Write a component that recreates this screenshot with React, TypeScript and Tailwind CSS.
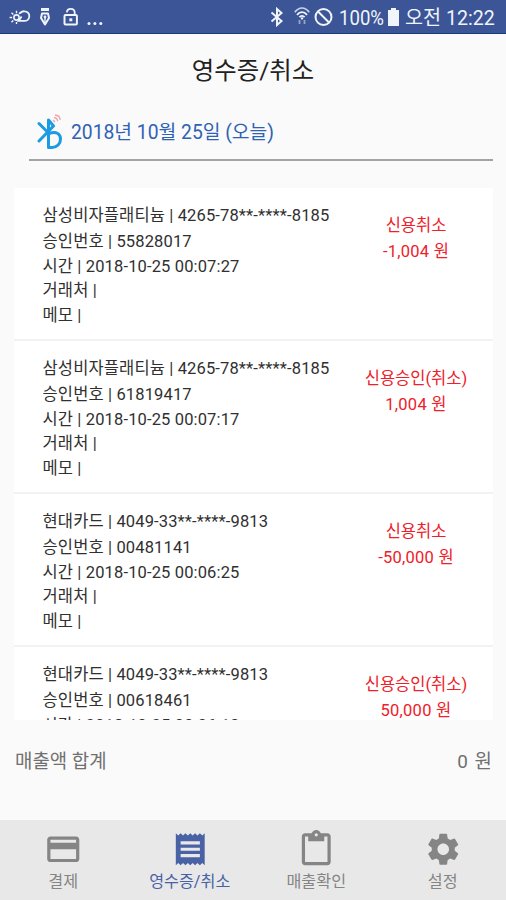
import React from 'react';
import { MdContentPaste, MdCreditCard, MdReceipt, MdSettings } from 'react-icons/md';

interface Receipt {
  card: string;
  approvalNo: string;
  time: string;
  status: string;
  amount: string;
}

const receipts: Receipt[] = [
  { card: '삼성비자플래티늄 | 4265-78**-****-8185', approvalNo: '55828017', time: '2018-10-25 00:07:27', status: '신용취소', amount: '-1,004 원' },
  { card: '삼성비자플래티늄 | 4265-78**-****-8185', approvalNo: '61819417', time: '2018-10-25 00:07:17', status: '신용승인(취소)', amount: '1,004 원' },
  { card: '현대카드 | 4049-33**-****-9813', approvalNo: '00481141', time: '2018-10-25 00:06:25', status: '신용취소', amount: '-50,000 원' },
  { card: '현대카드 | 4049-33**-****-9813', approvalNo: '00618461', time: '2018-10-25 00:06:13', status: '신용승인(취소)', amount: '50,000 원' },
];

const tabs = [
  { label: '결제', icon: MdCreditCard, active: false },
  { label: '영수증/취소', icon: MdReceipt, active: true },
  { label: '매출확인', icon: MdContentPaste, active: false },
  { label: '설정', icon: MdSettings, active: false },
];

const StatusBar: React.FC = () => (
  <div className="flex h-[34px] shrink-0 items-center border-b border-[#163a80] bg-[#3b5597] pl-[9px] pr-[11px] text-[#f0f4fb]">
    {/* 알림 아이콘 */}
    <svg className="h-5 w-[22px]" viewBox="0 0 22 20" fill="none" stroke="currentColor">
      <circle cx="7.5" cy="10.5" r="2.6" strokeWidth="1.6" />
      <path d="M7.5 3.8v2.4M7.5 15v2M.6 10.5h2.6M2.5 5.8l1.8 1.7M2.5 15.2l1.8-1.7M11.5 5.3l-1.4 1.6" strokeWidth="1.4" />
      <path d="M11 6.5c.8-1.600 2.6-2.400 4.600-2.200 3 .2 4.900 2.200 4.700 4.900-.2 2.900-2.300 4.900-5.300 4.700H9.600l3-4.400" strokeWidth="1.8" />
    </svg>
    <svg className="ml-[8px] h-[20px] w-3" viewBox="0 0 12 20" fill="none">
      <path d="M2 1h8v3H2z" fill="currentColor" />
      <path d="M3 6.5h6L10 11 6 17.5 2 11z" stroke="currentColor" strokeWidth="2" strokeLinejoin="round" />
      <circle cx="6" cy="10" r="1.4" fill="currentColor" />
      <path d="M6 11v6" stroke="currentColor" strokeWidth="1.4" />
    </svg>
    <svg className="ml-[12px] h-[20px] w-4" viewBox="0 0 16 20" fill="none" stroke="currentColor">
      <rect x="1.5" y="8" width="12.4" height="9.6" rx="1" strokeWidth="2" />
      <path d="M3.8 5.4C4 3 5.3 1.8 7.7 1.8s4 1.4 4 3.8V8" strokeWidth="1.8" />
      <path d="M6.3 11.3h3v3h-3z" fill="currentColor" stroke="none" />
    </svg>
    <svg className="ml-[8px] h-5 w-4" viewBox="0 0 16 20" fill="currentColor">
      <circle cx="2" cy="16.5" r="1.5" />
      <circle cx="7.9" cy="16.5" r="1.5" />
      <circle cx="13.8" cy="16.5" r="1.5" />
    </svg>

    <svg className="ml-auto h-5 w-[14px]" viewBox="0 0 14 20" fill="none" stroke="currentColor" strokeWidth="2">
      <path d="M1.5 5.5l10 8.500L7 18V2l4.500 4-10 8.500" />
    </svg>
    <svg className="ml-[10px] h-5 w-4" viewBox="0 0 16 20" fill="none" stroke="currentColor">
      <path d="M.8 5.2C5-.4 11-.4 15.2 5.2" strokeWidth="1.6" opacity=".8" />
      <path d="M3 7.8c3-3.6 7-3.6 10 0M5.4 10.2c1.6-1.8 3.6-1.8 5.2 0" strokeWidth="1.8" />
      <path d="M8 10.4v2" strokeWidth="2.2" />
      <path d="M5.5 13v4M10.5 13v4" strokeWidth="1.8" opacity=".5" />
    </svg>
    <svg className="ml-[4px] h-5 w-[19px]" viewBox="0 0 19 20" fill="none" stroke="currentColor" strokeWidth="2">
      <circle cx="9.5" cy="10" r="8" />
      <path d="M4 4.5l11 11" />
    </svg>
    <span className="ml-[6px] w-[45px] origin-left scale-x-[.93] whitespace-nowrap pt-[2px] text-[20px] leading-[32px]">100%</span>
    <svg className="ml-[3px] h-5 w-[13px]" viewBox="0 0 13 20" fill="currentColor">
      <path d="M4 1h5v2h3v16H1V3h3z" />
    </svg>
    <span className="ml-[5px] w-[90px] origin-left scale-x-[.98] whitespace-nowrap pt-[2px] text-[20px] leading-[32px]">오전 12:22</span>
  </div>
);

const ReceiptRow: React.FC<{ item: Receipt }> = ({ item }) => (
  <li className="flex h-[153px] shrink-0 border-b-2 border-[#f2f2f2] bg-white">
    <div className="w-[325px] whitespace-nowrap pl-[28.5px] pt-[15px] text-[16.5px] tracking-[0.14px] text-[#303030]">
      <p className="h-[26px] leading-[25px]">{item.card}</p>
      <p className="h-[25px] leading-[25px]">승인번호 | {item.approvalNo}</p>
      <p className="h-[26px] leading-[25px]">시간 | {item.time}</p>
      <p className="h-[23px] leading-[22px]">거래처 |</p>
      <p className="h-[26px] leading-[26px]">메모 |</p>
    </div>
    <div className="flex-1 pt-[25px] text-center text-[16.5px] leading-[26px] text-[#ee2029]">
      <p>{item.status}</p>
      <p className="tracking-[0.25px]">{item.amount}</p>
    </div>
  </li>
);

export default function App() {
  return (
    <div className="flex h-[900px] w-[506px] flex-col overflow-hidden bg-[#fafafa] font-[Roboto,'Noto_Sans_CJK_KR',sans-serif]">
      <StatusBar />

      <h1 className="mt-[17px] h-10 text-center text-[24.4px] leading-10 text-[#222]">영수증/취소</h1>

      {/* 조회 날짜 */}
      <div className="ml-[29px] mr-[13px] mt-[17px] flex h-[53px] border-b-2 border-[#a0a4a4] pl-[8px]">
        <svg className="mt-[4px] h-[40px] w-[28px] shrink-0" viewBox="0 0 28 40" fill="none">
          <path
            d="M2 11.5L12 21.5M2 29L16.500 14 11.500 8V35.500h3.500c5 0 8.500-3.800 8.500-8.500 0-5.500-4.500-8-11.500-5.500"
            stroke="#1b9be2"
            strokeWidth="3"
            strokeLinecap="round"
            strokeLinejoin="round"
          />
          <path d="M17 5.5c2 .3 3.500 1.600 3.700 3.700M18 3c3 .2 5 2.300 5.200 5M16 8l2 2" stroke="#eda5a5" strokeWidth="1.3" />
        </svg>
        <span className="ml-[6px] whitespace-nowrap text-[19.3px] leading-[50px] text-[#2f62b5]">2018년 10월 25일 (오늘)</span>
      </div>

      {/* 영수증 목록 */}
      <ul className="ml-[14px] mr-[13px] mt-[27px] flex h-[532px] shrink-0 flex-col overflow-hidden">
        {receipts.map((item) => (
          <ReceiptRow key={item.approvalNo} item={item} />
        ))}
      </ul>

      <div className="flex h-[100px] justify-between pl-[15px] pr-[13px] pt-[27px] text-[18.9px] leading-[30px] text-[#707070]">
        <span>매출액 합계</span>
        <span className="tracking-[1px]">0 원</span>
      </div>

      {/* 하단 탭 */}
      <nav className="grid h-20 shrink-0 grid-cols-4 bg-[#e8e8e8]">
        {tabs.map(({ label, icon: Icon, active }) => (
          <button key={label} className={`flex flex-col items-center pt-[10px] ${active ? 'text-[#4862a5]' : 'text-[#858585]'}`}>
            <Icon className="h-[38.5px] w-[38.5px]" />
            <span className="mt-[0.5px] text-[16.2px] leading-[25px]">{label}</span>
          </button>
        ))}
      </nav>
    </div>
  );
}
